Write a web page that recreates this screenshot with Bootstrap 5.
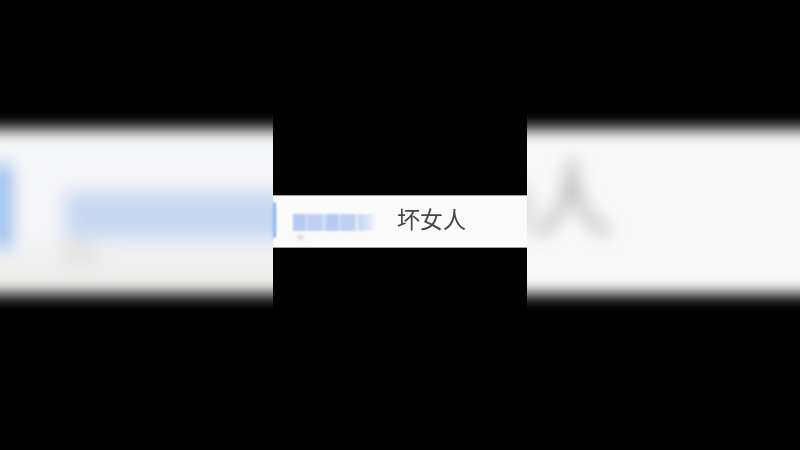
<!DOCTYPE html>
<html lang="zh">
<head>
<meta charset="utf-8">
<title>坏女人</title>
<link href="https://cdn.jsdelivr.net/npm/bootstrap@5.3.0/dist/css/bootstrap.min.css" rel="stylesheet">
<style>
html, body { height: 100%; overflow: hidden; background: #000; }
.stage { width: 800px; height: 450px; font-family: "Liberation Sans", "Noto Sans CJK SC", sans-serif; }
.side-pane { width: 273px; height: 450px; overflow: hidden; flex: none; }
.mid-pane { width: 254px; height: 450px; flex: none; }
.blur-band { width: 353px; margin-left: -40px; margin-top: 129px; height: 165px; filter: blur(8px); }
.band-left { background: linear-gradient(180deg, #f5f6f7 0, #f6f6f9 60%, #eeeeed 85%, #efefee 100%); padding: 36px 0 0 34px; gap: 55px; }
.band-right { background: #f9f9f9; padding-left: 40px; }
.blob-tile { width: 16px; height: 82px; background: #7fb0ea; flex: none; filter: blur(4px); }
.blur-col { width: 100%; }
.blur-bar { height: 46px; margin-top: 27px; background: #c4d7f1; filter: blur(6px); }
.blur-smudge { width: 30px; height: 26px; background: #e2e2e0; filter: blur(5px); }
.glyph-row { padding-top: 30px; }
.glyph-tail { width: 22px; height: 44px; margin: 26px 0 0 -18px; background: #dadada; filter: blur(6px); flex: none; }
.big-glyph { font-size: 84px; line-height: 1; color: #a2a2a2; margin-left: -1px; filter: blur(5px); white-space: nowrap; }
.clear-strip { height: 53px; margin-top: 195px; background: #fbfbfc; border-top: 1px solid #a0a0a0; border-bottom: 1px solid #a0a0a0; filter: blur(.4px); }
.tile-edge { width: 3px; height: 36px; margin-top: -3px; background: #7cb0e6; border-radius: 0 3px 3px 0; flex: none; filter: blur(.8px); }
.name-col { width: 82px; margin-left: 17px; margin-top: 11px; flex: none; filter: blur(1.2px); }
.name-bar { height: 17px; background: repeating-linear-gradient(90deg, #b6cbef 0 12px, #cbdaf4 12px 15px, #bdd0f1 15px 29px, #d3e0f6 29px 33px); -webkit-mask-image: linear-gradient(90deg, #000 72%, rgba(0,0,0,.2) 100%); mask-image: linear-gradient(90deg, #000 72%, rgba(0,0,0,.2) 100%); }
.name-tail { width: 7px; height: 5px; margin: 4px 0 0 4px; background: #e0e0e0; }
.strip-text { font-size: 23px; line-height: 1; color: #464646; margin-left: 22px; margin-top: -3px; filter: blur(.5px); white-space: nowrap; }
</style>
</head>
<body class="m-0">
<div class="stage d-flex">
  <div class="side-pane">
    <div class="blur-band band-left d-flex">
      <div class="blob-tile"></div>
      <div class="blur-col">
        <div class="blur-bar"></div>
        <div class="blur-smudge"></div>
      </div>
    </div>
  </div>
  <div class="mid-pane">
    <div class="clear-strip d-flex align-items-center">
      <div class="tile-edge"></div>
      <div class="name-col">
        <div class="name-bar"></div>
        <div class="name-tail"></div>
      </div>
      <div class="strip-text">坏女人</div>
    </div>
  </div>
  <div class="side-pane">
    <div class="blur-band band-right">
      <div class="glyph-row d-flex">
        <div class="glyph-tail"></div>
        <div class="big-glyph">人</div>
      </div>
    </div>
  </div>
</div>
<script src="https://cdn.jsdelivr.net/npm/bootstrap@5.3.0/dist/js/bootstrap.bundle.min.js"></script>
</body>
</html>
